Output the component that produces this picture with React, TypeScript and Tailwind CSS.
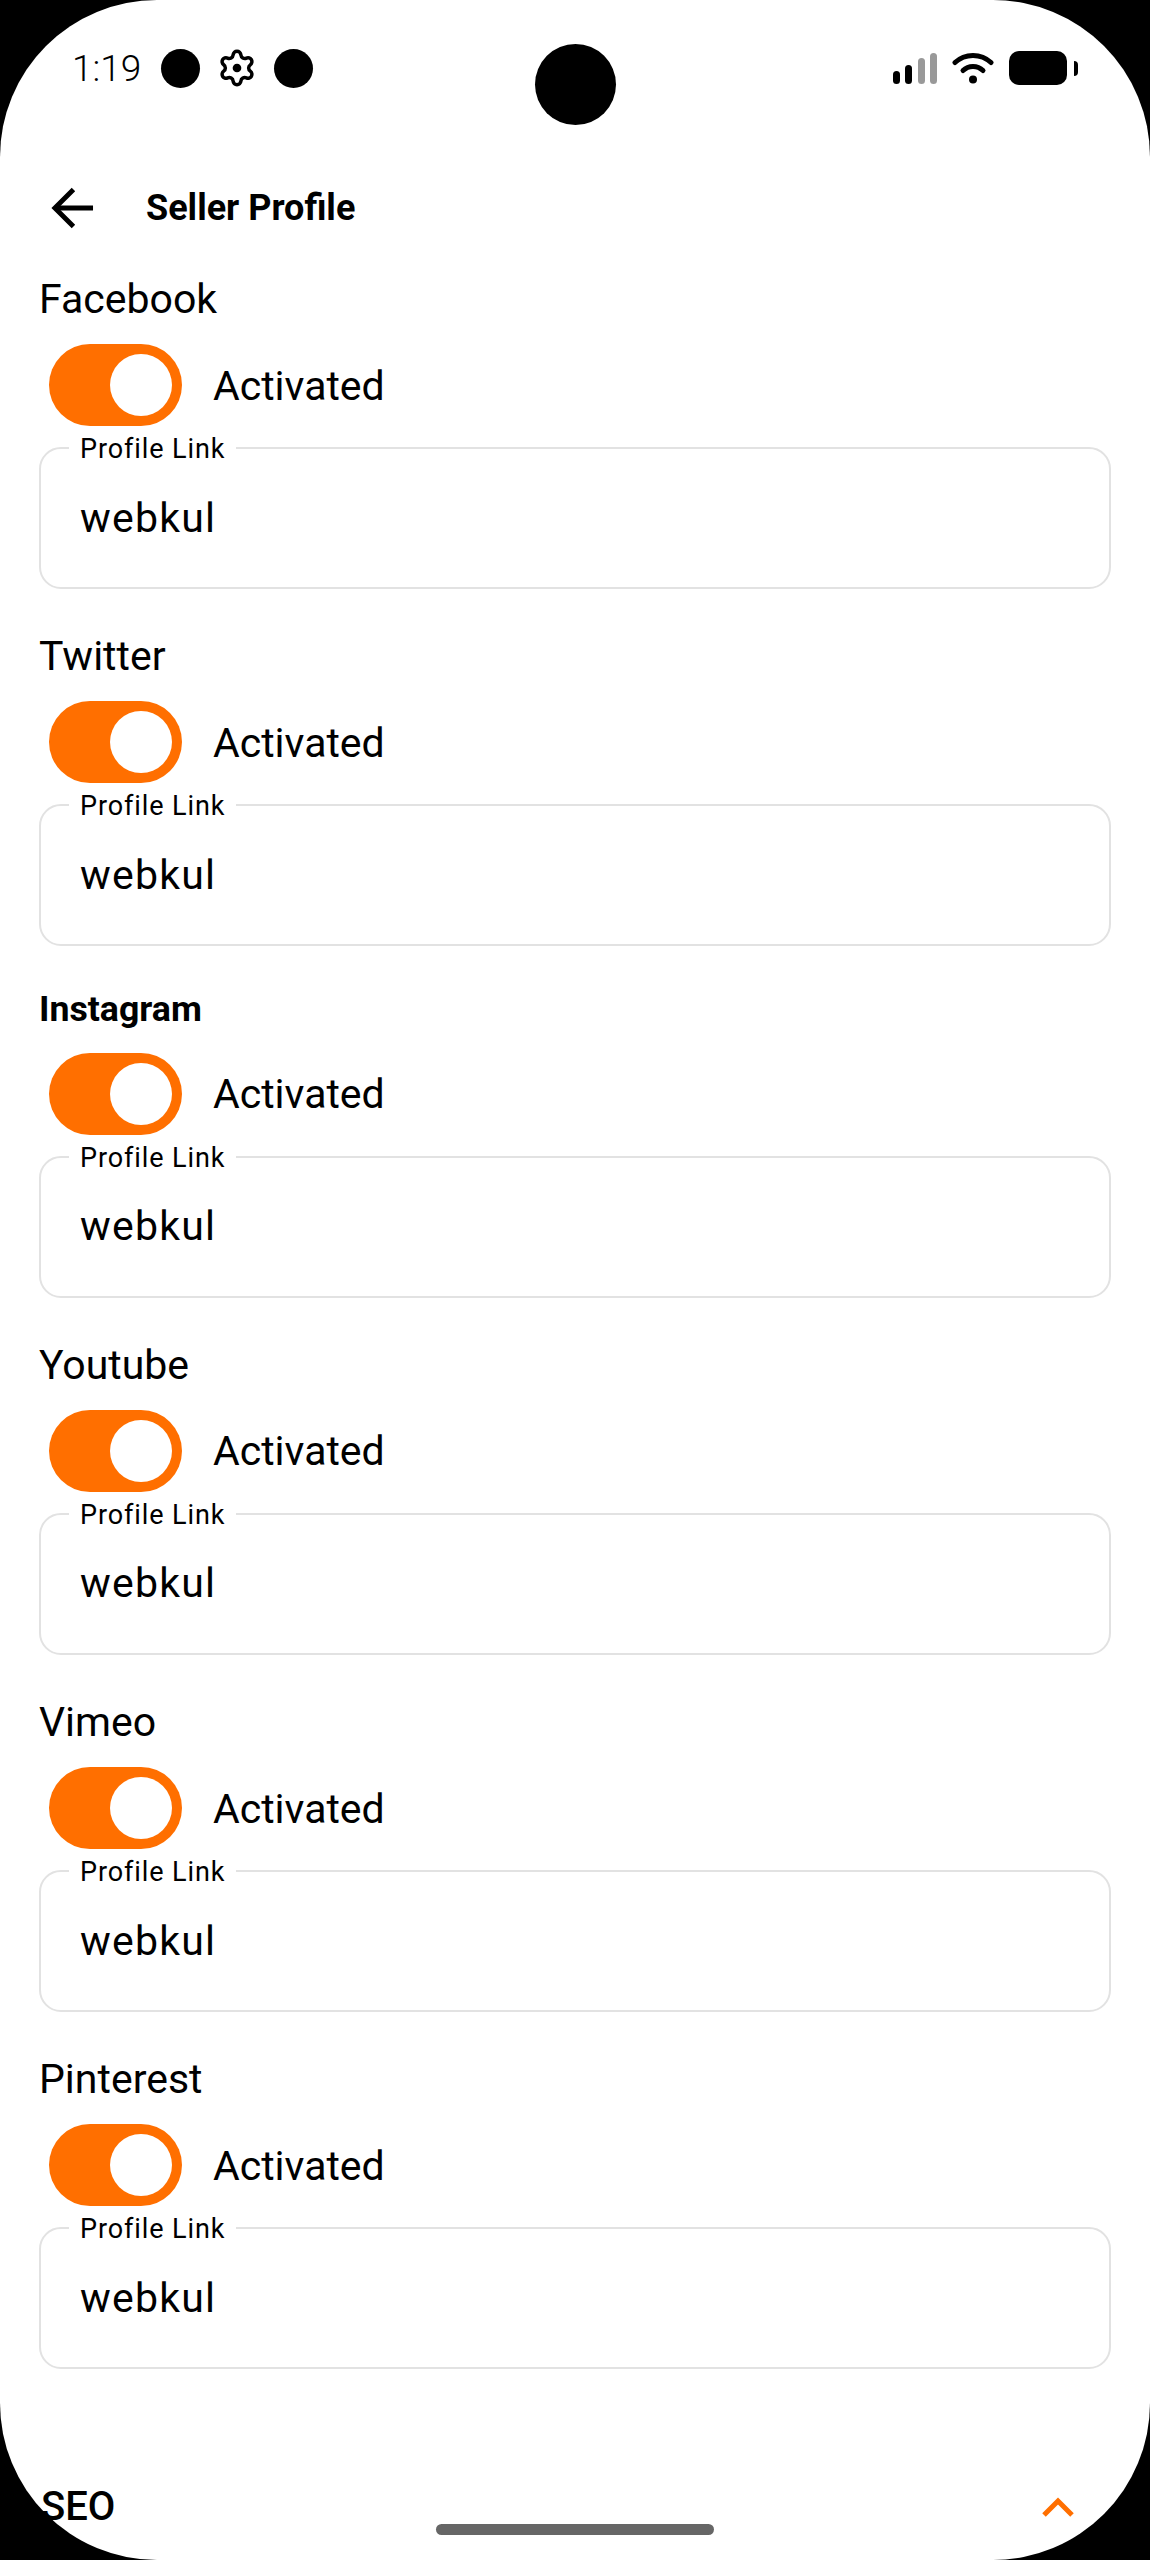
const networks = [
  { name: "Facebook" },
  { name: "Twitter" },
  { name: "Instagram", bold: true },
  { name: "Youtube" },
  { name: "Vimeo" },
  { name: "Pinterest" },
];

function GearIcon() {
  return (
    <svg width="40" height="40" viewBox="0 0 24 24" fill="none" stroke="#000" strokeWidth="2.1" strokeLinejoin="round" className="mx-[17px] block">
      <path d="M9.671 4.136a2.34 2.34 0 0 1 4.659 0 2.34 2.34 0 0 0 3.319 1.915 2.34 2.34 0 0 1 2.33 4.033 2.34 2.34 0 0 0 0 3.831 2.34 2.34 0 0 1-2.33 4.033 2.34 2.34 0 0 0-3.319 1.915 2.34 2.34 0 0 1-4.659 0 2.34 2.34 0 0 0-3.32-1.915 2.34 2.34 0 0 1-2.33-4.033 2.34 2.34 0 0 0 0-3.831A2.34 2.34 0 0 1 6.35 6.051a2.34 2.34 0 0 0 3.32-1.915" />
      <circle cx="12" cy="12" r="2.6" fill="#000" stroke="none" />
    </svg>
  );
}

function SignalIcon() {
  return (
    <svg width="44" height="31" viewBox="0 0 44 31" className="block">
      <rect x="0" y="18" width="7" height="13" rx="3.5" fill="#000" />
      <rect x="12" y="12" width="7" height="19" rx="3.5" fill="#000" />
      <rect x="25" y="5" width="7" height="26" rx="3.5" fill="#999" />
      <rect x="37" y="0" width="7" height="31" rx="3.5" fill="#999" />
    </svg>
  );
}

function WifiIcon() {
  return (
    <svg width="42" height="32" viewBox="0 0 42 32" className="block" fill="none" stroke="#000" strokeWidth="5" strokeLinecap="round">
      <path d="M3 10.5C13 1 29 1 39 10.5" />
      <path d="M11 18.5C16.5 13 25.5 13 31 18.5" />
      <circle cx="21" cy="27.5" r="4" fill="#000" stroke="none" />
    </svg>
  );
}

function BatteryIcon() {
  return (
    <div className="flex items-center gap-[7px]">
      <div className="h-[34px] w-[58px] rounded-[10px] bg-black" />
      <div className="h-[15px] w-[4px] rounded-r-full bg-black" />
    </div>
  );
}

function StatusBar() {
  return (
    <div className="flex h-[136px] items-center justify-between pl-[72px] pr-[72px]">
      <div className="flex items-center">
        <span className="w-[89px] text-[37px] font-light leading-none text-black">1:19</span>
        <div className="h-[39px] w-[39px] rounded-full bg-black" />
        <GearIcon />
        <div className="h-[39px] w-[39px] rounded-full bg-black" />
      </div>
      <div className="flex items-center gap-[15px]">
        <SignalIcon />
        <WifiIcon />
        <BatteryIcon />
      </div>
    </div>
  );
}

function NetworkSection({ name, bold }: { name: string; bold?: boolean }) {
  return (
    <section className="mb-[43.25px]">
      <h2 className={bold ? "flex h-[40px] items-center pt-[1px] text-[35.7px] font-bold leading-none text-black" : "flex h-[47px] items-center pt-[2px] text-[41px] leading-none text-black"}>
        {name}
      </h2>
      <div className={bold ? "mt-[23px] flex items-center gap-[31px] pl-[10px]" : "mt-[22px] flex items-center gap-[31px] pl-[10px]"}>
        <div className="flex h-[82px] w-[133px] items-center justify-end rounded-full bg-[#ff6f00] pr-[10px]">
          <div className="h-[62px] w-[62px] rounded-full bg-white" />
        </div>
        <span className="pt-[2px] text-[41px] leading-none text-black">Activated</span>
      </div>
      <div className="relative mt-[21px] flex h-[142px] items-center rounded-[22px] border-2 border-[#e2e2e2] pl-[39px]">
        <span className="absolute left-[28px] top-[-14px] bg-white px-[11px] text-[27px] leading-[28px] tracking-[0.9px] text-black">Profile Link</span>
        <span className="text-[41px] leading-none tracking-[1.2px] text-black">webkul</span>
      </div>
    </section>
  );
}

export default function App() {
  return (
    <div className="h-[2560px] w-[1150px] bg-black font-['Roboto',sans-serif]">
      <div className="relative flex h-full flex-col rounded-[157px] bg-white">
        <div className="absolute left-[535px] top-[44px] h-[81px] w-[81px] rounded-full bg-black" />
        <StatusBar />

        <header className="mb-[28px] mt-[33px] flex h-[78px] items-center gap-[52px] pl-[50px]">
          <svg width="44" height="44" viewBox="0 0 45 44" fill="none" stroke="#000" strokeWidth="5" className="block">
            <path d="M44 22H5" />
            <path d="M24 3L5 22l19 19" />
          </svg>
          <h1 className="text-[36px] font-bold leading-none text-black">Seller Profile</h1>
        </header>

        <main className="px-[39px]">
          {networks.map((network) => (
            <NetworkSection key={network.name} name={network.name} bold={network.bold} />
          ))}
        </main>

        <div className="mt-[74px] flex h-[40px] items-center justify-between pl-[41px] pr-[76px]">
          <span className="text-[40px] font-medium leading-none text-black">SEO</span>
          <svg width="32" height="20" viewBox="0 0 32 20" fill="none" stroke="#ff6f00" strokeWidth="5" className="block">
            <path d="M2 18L16 4l14 14" />
          </svg>
        </div>

        <div className="absolute bottom-[25px] left-[436px] h-[11px] w-[278px] rounded-full bg-[#666666]" />
      </div>
    </div>
  );
}
